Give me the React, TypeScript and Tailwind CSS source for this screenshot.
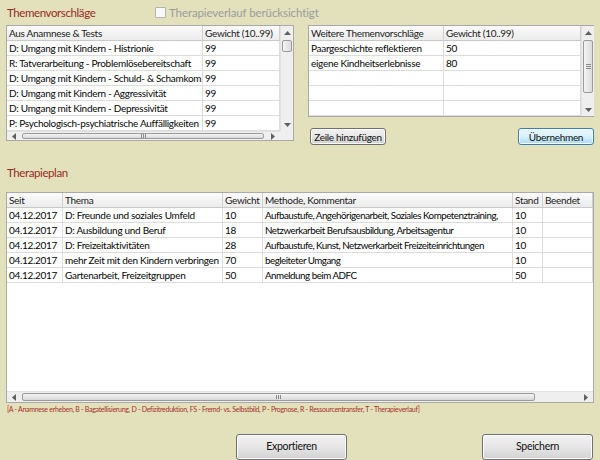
import React from 'react';
import clsx from 'clsx';

type Col = { title: string; w: string; cls?: string };

const anamneseCols: Col[] = [
  { title: 'Aus Anamnese & Tests', w: 'w-[196px]' },
  { title: 'Gewicht (10..99)', w: 'w-[77px]' },
];

const anamneseRows = [
  ['D: Umgang mit Kindern - Histrionie', '99'],
  ['R: Tatverarbeitung - Problemlösebereitschaft', '99'],
  ['D: Umgang mit Kindern - Schuld- & Schamkom', '99'],
  ['D: Umgang mit Kindern - Aggressivität', '99'],
  ['D: Umgang mit Kindern - Depressivität', '99'],
  ['P: Psychologisch-psychiatrische Auffälligkeiten', '99'],
];

const weitereCols: Col[] = [
  { title: 'Weitere Themenvorschläge', w: 'w-[135px]' },
  { title: 'Gewicht (10..99)', w: 'w-[137px]' },
];

const weitereRows = [
  ['Paargeschichte reflektieren', '50'],
  ['eigene Kindheitserlebnisse', '80'],
  ['', ''],
  ['', ''],
  ['', ''],
];

const planCols: Col[] = [
  { title: 'Seit', w: 'w-[56px]' },
  { title: 'Thema', w: 'w-[160px]' },
  { title: 'Gewicht', w: 'w-[40px]' },
  { title: 'Methode, Kommentar', w: 'w-[250px]', cls: 'text-[9.8px] tracking-[-0.5px]' },
  { title: 'Stand', w: 'w-[30px]' },
  { title: 'Beendet', w: 'w-[50px]' },
];

const planRows = [
  ['04.12.2017', 'D: Freunde und soziales Umfeld', '10', 'Aufbaustufe, Angehörigenarbeit, Soziales Kompetenztraining,', '10', ''],
  ['04.12.2017', 'D: Ausbildung und Beruf', '18', 'Netzwerkarbeit Berufsausbildung, Arbeitsagentur', '10', ''],
  ['04.12.2017', 'D: Freizeitaktivitäten', '28', 'Aufbaustufe, Kunst, Netzwerkarbeit Freizeiteinrichtungen', '10', ''],
  ['04.12.2017', 'mehr Zeit mit den Kindern verbringen', '70', 'begleiteter Umgang', '10', ''],
  ['04.12.2017', 'Gartenarbeit, Freizeitgruppen', '50', 'Anmeldung beim ADFC', '50', ''],
];

const Arrow = ({ dir }: { dir: 'up' | 'down' | 'left' | 'right' }) => {
  const d = {
    up: 'M0 4 L3.5 0 L7 4 Z',
    down: 'M0 0 L7 0 L3.5 4 Z',
    left: 'M4 0 L4 7 L0 3.5 Z',
    right: 'M0 0 L4 3.5 L0 7 Z',
  }[dir];
  const vertical = dir === 'up' || dir === 'down';
  return (
    <svg width={vertical ? 7 : 4} height={vertical ? 4 : 7} viewBox={vertical ? '0 0 7 4' : '0 0 4 7'}>
      <path d={d} fill="#606060" />
    </svg>
  );
};

const HeaderRow = ({ cols }: { cols: Col[] }) => (
  <div className="flex h-[15px] shrink-0 bg-gradient-to-b from-[#fbfbfb] to-[#ececec] border-b border-[#c9c9c9]">
    {cols.map((c) => (
      <div
        key={c.title}
        className={clsx(c.w, 'shrink-0 border-r border-[#d0d0d0] pl-[2px] leading-[14px] whitespace-nowrap overflow-hidden text-[#1a1a1a]')}
      >
        {c.title}
      </div>
    ))}
  </div>
);

const BodyRow = ({ cols, cells }: { cols: Col[]; cells: string[] }) => (
  <div className="flex h-[15px] shrink-0 bg-white">
    {cols.map((c, i) => (
      <div
        key={c.title}
        className={clsx(c.w, c.cls, 'shrink-0 border-r border-b border-[#dcdcdc] pl-[2px] leading-[14px] whitespace-nowrap overflow-hidden')}
      >
        {cells[i]}
      </div>
    ))}
  </div>
);

// vertical scrollbar; thumb offset/size given as classes
const VScroll = ({ top, size, grip }: { top: string; size: string; grip?: boolean }) => (
  <div className="w-[13px] shrink-0 flex flex-col bg-[#efefef] border-l border-[#e2e2e2]">
    <div className="h-[13px] flex items-center justify-center">
      <Arrow dir="up" />
    </div>
    <div className="flex-1 px-[1px]">
      <div
        className={clsx(
          top,
          size,
          'rounded-[2px] border border-[#9b9b9b] bg-gradient-to-r from-[#f4f4f4] to-[#dcdcdc] flex flex-col items-center justify-center gap-[1px]'
        )}
      >
        {grip && (
          <>
            <div className="w-[5px] h-px bg-[#8a8a8a]" />
            <div className="w-[5px] h-px bg-[#8a8a8a]" />
            <div className="w-[5px] h-px bg-[#8a8a8a]" />
          </>
        )}
      </div>
    </div>
    <div className="h-[12px] flex items-center justify-center">
      <Arrow dir="down" />
    </div>
  </div>
);

const HScroll = ({ thumb }: { thumb: string }) => (
  <div className="flex-1 flex items-stretch bg-[#efefef] border-t border-[#e2e2e2]">
    <div className="w-[14px] shrink-0 flex items-center justify-center">
      <Arrow dir="left" />
    </div>
    <div className="flex-1 flex py-[1px] pl-[1px]">
      <div
        className={clsx(
          thumb,
          'rounded-[2px] border border-[#9b9b9b] bg-gradient-to-b from-[#f4f4f4] to-[#d9d9d9] flex items-center justify-center gap-[1px]'
        )}
      >
        <div className="w-px h-[4px] bg-[#8a8a8a]" />
        <div className="w-px h-[4px] bg-[#8a8a8a]" />
        <div className="w-px h-[4px] bg-[#8a8a8a]" />
      </div>
    </div>
    <div className="w-[14px] shrink-0 flex items-center justify-center">
      <Arrow dir="right" />
    </div>
  </div>
);

const GrayButton = ({ label, className }: { label: string; className: string }) => (
  <button
    className={clsx(
      className,
      'whitespace-nowrap rounded-[3px] border border-[#707070] bg-gradient-to-b from-[#f2f2f2] via-[#e6e6e6] to-[#d2d2d2] shadow-[inset_0_0_0_1px_#fcfcfc] text-[#111]'
    )}
  >
    {label}
  </button>
);

const App: React.FC = () => {
  return (
    <div className="w-[600px] h-[460px] bg-[#e2e1bc] font-['Lato',sans-serif] text-[10px] tracking-[-0.3px] text-[#050505] flex flex-col overflow-hidden">
      {/* Themenvorschläge */}
      <div className="h-[25px] flex items-center pl-[7px] shrink-0">
        <div className="w-[148px] text-[11.5px] tracking-[-0.4px] text-[#9b2b1f]">Themenvorschläge</div>
        <label className="flex items-center gap-[3px] text-[11.5px] tracking-[-0.1px] text-[#9c9c9c]">
          <span className="w-[11px] h-[11px] border border-[#b4b4b4] bg-[#f8f8f8] rounded-[1px]" />
          Therapieverlauf berücksichtigt
        </label>
      </div>

      <div className="flex pl-[6px] shrink-0">
        {/* Aus Anamnese & Tests */}
        <div className="w-[288px] h-[116px] border border-[#a9a9a9] flex flex-col bg-white">
          <div className="flex">
            <div className="flex flex-col">
              <HeaderRow cols={anamneseCols} />
              {anamneseRows.map((r) => (
                <BodyRow key={r[0]} cols={anamneseCols} cells={r} />
              ))}
            </div>
            <VScroll top="mt-[1px]" size="h-[12px]" />
          </div>
          <div className="flex flex-1">
            <HScroll thumb="w-[242px]" />
            <div className="w-[13px] bg-[#efefef]" />
          </div>
        </div>

        {/* Weitere Themenvorschläge */}
        <div className="ml-[14px] w-[286px] flex flex-col">
          <div className="h-[92px] border border-[#a9a9a9] flex bg-white">
            <div className="flex flex-col">
              <HeaderRow cols={weitereCols} />
              {weitereRows.map((r, i) => (
                <BodyRow key={i} cols={weitereCols} cells={r} />
              ))}
            </div>
            <VScroll top="mt-[1px]" size="h-[53px]" grip />
          </div>
          <div className="mt-[11px] flex justify-between pl-[2px]">
            <GrayButton label="Zeile hinzufügen" className="w-[76px] h-[17px] leading-[14px]" />
            <button className="w-[76px] h-[17px] leading-[14px] whitespace-nowrap rounded-[3px] border border-[#3c7fb1] bg-gradient-to-b from-[#eaf6fd] via-[#d9f0fc] to-[#a7d9f5] shadow-[inset_0_0_0_1px_#f4fbff] text-[#111]">
              Übernehmen
            </button>
          </div>
        </div>
      </div>

      {/* Therapieplan */}
      <div className="h-[47px] pt-[20px] pl-[7px] shrink-0">
        <div className="text-[11.5px] tracking-[-0.4px] leading-[16px] text-[#9b2b1f]">Therapieplan</div>
      </div>

      <div className="ml-[6px] w-[588px] h-[211px] border border-[#a9a9a9] bg-white flex flex-col shrink-0">
        <HeaderRow cols={planCols} />
        {planRows.map((r) => (
          <BodyRow key={r[1]} cols={planCols} cells={r} />
        ))}
        <div className="flex-1" />
        <div className="h-[11px] flex">
          <HScroll thumb="w-[513px]" />
        </div>
      </div>

      <div className="pl-[7px] pt-[1px] text-[7px] tracking-[-0.3px] leading-[10px] text-[#a8302b] whitespace-nowrap shrink-0">
        [A - Anamnese erheben, B - Bagatellisierung, D - Defizitreduktion, FS - Fremd- vs. Selbstbild, P - Prognose, R - Ressourcentransfer, T - Therapieverlauf]
      </div>

      <div className="flex pt-[20px] pl-[236px] text-[10.5px] shrink-0">
        <GrayButton label="Exportieren" className="w-[111px] h-[26px]" />
        <GrayButton label="Speichern" className="ml-[135px] w-[111px] h-[26px]" />
      </div>
    </div>
  );
};

export default App;
